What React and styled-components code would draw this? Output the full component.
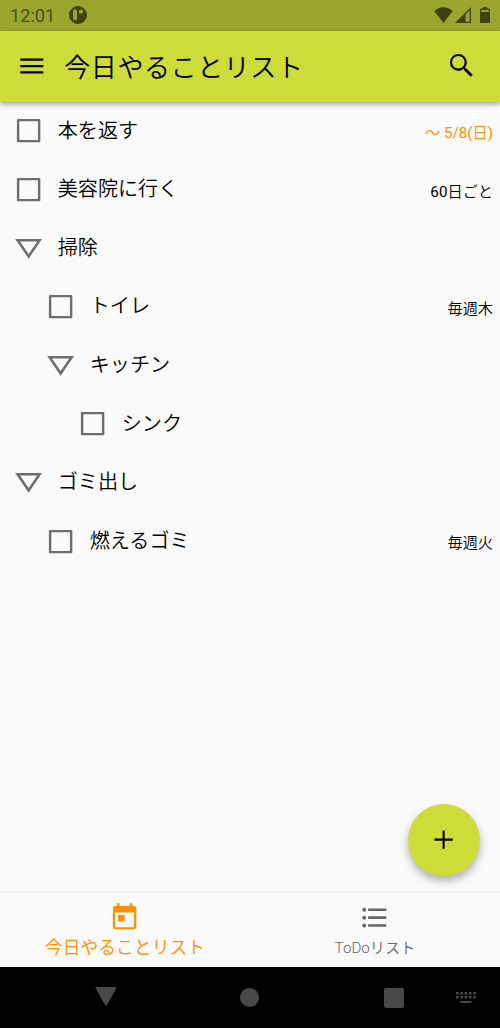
import React, { useState } from 'react'
import styled, { createGlobalStyle } from 'styled-components'

const LIME = '#cddc39'
const ORANGE = '#ff8f00'
const ICON_SIZE = '31.25px'
const INDENT = 32

const GlobalStyle = createGlobalStyle`
  * {
    box-sizing: border-box;
  }

  body {
    margin: 0;
    background: #fafafa;
    font-family: Roboto, 'Noto Sans CJK JP', sans-serif;
    font-weight: 350;
  }

  button {
    padding: 0;
    border: 0;
    background: none;
    color: inherit;
    font: inherit;
  }
`

const Screen = styled.div`
  display: flex;
  flex-direction: column;
  position: relative;
  width: 500px;
  height: 1028px;
  overflow: hidden;
  background: #fafafa;
  color: #000;
`

const StatusBar = styled.div`
  display: flex;
  align-items: center;
  height: 30.5px;
  padding: 0 10px 0 10px;
  background: #9aa52d;
  color: #3e420f;

  svg {
    display: block;
    fill: currentColor;
  }
`

const Clock = styled.span`
  width: 59px;
  padding-top: 2px;
  font-size: 18.2px;
  font-weight: 400;
  line-height: 20px;
  opacity: 0.85;
`

const StatusIcons = styled.div`
  display: flex;
  align-items: center;
  margin-left: auto;
`

const SignalBox = styled.div`
  margin: 0 9px 0 2px;
`

const AppBar = styled.header`
  display: flex;
  align-items: center;
  z-index: 1;
  height: 71.2px;
  padding: 0 23px 0 16px;
  background: ${LIME};
  box-shadow: 0 2px 5px rgba(0, 0, 0, 0.38);
`

const IconButton = styled.button`
  display: block;
  height: ${ICON_SIZE};
`

const Icon = styled.svg`
  display: block;
  flex: none;
  width: ${ICON_SIZE};
  height: ${ICON_SIZE};
  fill: currentColor;
`

const Title = styled.h1`
  flex: 1;
  margin: 0 0 0 17px;
  padding-top: 4px;
  font-size: 26.04px;
  font-weight: 350;
  line-height: 38px;
  letter-spacing: 0.55px;
`

const List = styled.ul`
  flex: 1;
  margin: 0;
  padding: 0;
  list-style: none;
`

const Row = styled.li`
  display: flex;
  align-items: center;
  height: 58.6px;
  padding-left: ${({ $level }) => 13 + $level * INDENT}px;
  padding-right: 7px;
`

const Marker = styled.button`
  color: #6e6e6e;
`

const Label = styled.span`
  flex: 1;
  margin-left: 13.5px;
  padding-bottom: 0.6px;
  font-size: 20.1px;
  line-height: 30px;
`

const Schedule = styled.span`
  padding-top: 4px;
  color: ${({ $due }) => ($due ? ORANGE : '#000')};
  font-size: 15.2px;
  line-height: 22px;
`

const Latin = styled.span`
  font-weight: 400;
`

const Fab = styled.button`
  display: flex;
  align-items: center;
  justify-content: center;
  position: absolute;
  right: 20px;
  bottom: 152.5px;
  width: 72px;
  height: 72px;
  border-radius: 50%;
  background: ${LIME};
  box-shadow: 0 5px 9px rgba(0, 0, 0, 0.3);
`

const Tabs = styled.nav`
  display: flex;
  height: 75px;
  border-top: 1px solid #f0f0f0;
  box-shadow: 0 -1px 1px rgba(0, 0, 0, 0.03);
`

const Tab = styled.button`
  display: flex;
  flex: 1;
  flex-direction: column;
  align-items: center;
  padding-top: ${({ $active }) => ($active ? '8.5px' : '9px')};
  color: ${({ $active }) => ($active ? ORANGE : '#666')};
  font-size: ${({ $active }) => ($active ? '17.8px' : '15.2px')};
  line-height: ${({ $active }) => ($active ? '29px' : '30px')};
`

const SystemNav = styled.div`
  display: flex;
  align-items: center;
  height: 61px;
  padding: 0 24px 0 95px;
  background: #000;
  color: #484848;

  svg {
    display: block;
    fill: currentColor;
  }
`

const Back = styled.svg`
  margin-bottom: 2px;
`

const Home = styled.div`
  width: 19px;
  height: 19px;
  margin: 0 125px 0 123px;
  border-radius: 50%;
  background: currentColor;
`

const Recents = styled.div`
  width: 20px;
  height: 20px;
  margin-right: auto;
  border-radius: 2px;
  background: currentColor;
`

const PATHS = {
  menu: 'M3.3 18.1H21v-1.700H3.3v1.700zm0-4.900H21v-1.700H3.3v1.700zm0-6.700v1.700H21V6.500H3.3z',
  search: 'M15.5 14h-.79l-.28-.27A6.471 6.471 0 0 0 16 9.5 6.5 6.5 0 1 0 9.5 16c1.61 0 3.09-.59 4.23-1.57l.27.28v.79l5 4.99L20.49 19l-4.99-5zm-6 .3C6.85 14.3 4.7 12.15 4.7 9.5S6.85 4.7 9.5 4.7s4.8 2.15 4.8 4.8-2.15 4.8-4.8 4.8z',
  add: 'M19 12.8h-6.200V19h-1.600v-6.200H5v-1.600h6.200V5h1.600v6.200H19v1.600z',
  checkbox: 'M3.8 3h16.4a.8.8 0 0 1 .8.8v16.4a.8.8 0 0 1-.8.8H3.8a.8.8 0 0 1-.8-.8V3.8a.8.8 0 0 1 .8-.8zM4.850 4.850v14.300h14.300V4.850H4.850z',
  expanded: 'M1.700 4.700h20.600L12 19.700 1.700 4.700zm3.700 1.850L12 16.200l6.600-9.650H5.400z',
  today: 'M19 3h-1V1h-2v2H8V1H6v2H5c-1.11 0-1.99.9-1.99 2L3 19c0 1.1.89 2 2 2h14c1.1 0 2-.9 2-2V5c0-1.1-.9-2-2-2zm.3 16.300H4.700V8h14.600v11.300zM7 10h5v5H7z',
  list: 'M4 10.5c-.83 0-1.5.67-1.5 1.5s.67 1.5 1.5 1.5 1.5-.67 1.5-1.5-.67-1.5-1.5-1.5zm0-6c-.83 0-1.5.67-1.5 1.5S3.17 7.5 4 7.5 5.5 6.83 5.5 6 4.83 4.5 4 4.5zm0 12c-.83 0-1.5.68-1.5 1.5s.68 1.5 1.5 1.5 1.5-.68 1.5-1.5-.67-1.5-1.5-1.5zM7 19h14v-2H7v2zm0-6h14v-2H7v2zm0-8v2h14V5H7z'
}

const Glyph = ({ name }) => (
  <Icon viewBox='0 0 24 24'>
    <path fillRule='evenodd' d={PATHS[name]} />
  </Icon>
)

const TASKS = [
  { name: '本を返す', schedule: '〜 5/8(日)', level: 0, due: true },
  { name: '美容院に行く', schedule: '60日ごと', level: 0 },
  { name: '掃除', level: 0, group: true },
  { name: 'トイレ', schedule: '毎週木', level: 1 },
  { name: 'キッチン', level: 1, group: true },
  { name: 'シンク', level: 2 },
  { name: 'ゴミ出し', level: 0, group: true },
  { name: '燃えるゴミ', schedule: '毎週火', level: 1 }
]

const TABS = [
  { name: '今日やることリスト', icon: 'today' },
  { name: 'ToDoリスト', icon: 'list' }
]

// Roboto looks too thin next to the kana, so digits get the regular weight
const renderSchedule = text => text.split(/([\d/()]+)/).map((part, index) => (
  index % 2 ? <Latin key={index}>{part}</Latin> : part
))

const Status = () => (
  <StatusBar>
    <Clock>12:01</Clock>
    <svg width='18' height='18' viewBox='0 0 18 18'>
      <path fillRule='evenodd' d='M9 0a9 9 0 1 1 0 18A9 9 0 0 1 9 0zM6 3.400a1.900 1.900 0 0 0-1.900 1.900v6.900a1.900 1.900 0 0 0 3.900 0V5.300A1.900 1.900 0 0 0 6 3.400zM12 3.400a2.200 2.200 0 1 0 0 4.400 2.200 2.200 0 0 0 0-4.400z' />
    </svg>
    <StatusIcons>
      <svg width='19' height='16' viewBox='0 0 19 16'>
        <path d='M9.5 16L.2 4C3 1.5 6 .2 9.5.2S16 1.5 18.8 4L9.5 16z' />
      </svg>
      <SignalBox>
        <svg width='16' height='16' viewBox='0 0 16 16'>
          <path fillRule='evenodd' d='M16 0v16H0L16 0zM14.7 3.2L10.5 7.4v7.3h4.2V3.2z' />
        </svg>
      </SignalBox>
      <svg width='10' height='16' viewBox='0 0 10 16'>
        <path fillRule='evenodd' d='M3 0h4v1.5h2a1 1 0 0 1 1 1V15a1 1 0 0 1-1 1H1a1 1 0 0 1-1-1V2.5a1 1 0 0 1 1-1h2V0zM1.2 3v2h7.6V3H1.2z' />
      </svg>
    </StatusIcons>
  </StatusBar>
)

const Task = ({ name, schedule, level, due, group }) => (
  <Row $level={level}>
    <Marker>
      <Glyph name={group ? 'expanded' : 'checkbox'} />
    </Marker>
    <Label>{name}</Label>
    {schedule && <Schedule $due={due}>{renderSchedule(schedule)}</Schedule>}
  </Row>
)

const SystemButtons = () => (
  <SystemNav>
    <Back width='22' height='19' viewBox='0 0 22 19'>
      <path d='M1.5 0h19q1.5 0 .8 1.4L12 18q-1 1.4-2 0L.7 1.4Q0 0 1.5 0z' />
    </Back>
    <Home />
    <Recents />
    <svg width='20' height='11' viewBox='0 0 20 11'>
      {[0, 4].map(y => [0, 4.3, 8.6, 12.9, 17.2].map(x => (
        <rect key={`${x}:${y}`} x={x} y={y} width='2.6' height='2.6' />
      )))}
      <rect x='4.3' y='9' width='11.2' height='2' />
    </svg>
  </SystemNav>
)

export default function App () {
  const [active, setActive] = useState(0)

  return <Screen>
    <GlobalStyle />
    <Status />
    <AppBar>
      <IconButton><Glyph name='menu' /></IconButton>
      <Title>{TABS[active].name}</Title>
      <IconButton><Glyph name='search' /></IconButton>
    </AppBar>
    <List>
      {TASKS.map(task => <Task key={task.name} {...task} />)}
    </List>
    <Tabs>
      {TABS.map(({ name, icon }, index) => (
        <Tab key={name} $active={index === active} onClick={() => setActive(index)}>
          <Glyph name={icon} />
          {name}
        </Tab>
      ))}
    </Tabs>
    <SystemButtons />
    <Fab><Glyph name='add' /></Fab>
  </Screen>
}
